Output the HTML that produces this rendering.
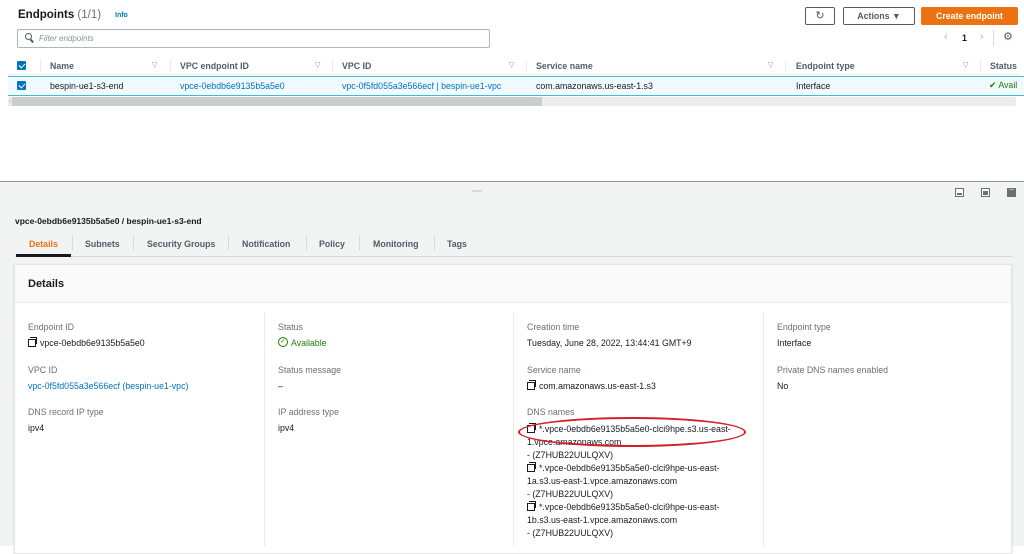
<!DOCTYPE html>
<html><head><style>
*{box-sizing:border-box;margin:0;padding:0}
body{width:1024px;height:546px;overflow:hidden;background:#fff;font-family:"Liberation Sans",sans-serif;font-size:8.8px;color:#16191f;position:relative}
.a{position:absolute;white-space:nowrap}
.blue{color:#0073bb}
.g{color:#687078}
.cb{position:absolute;width:9px;height:9px;background:#0073bb;border-radius:1px}
.cb:after{content:"";position:absolute;left:2.5px;top:0.5px;width:3px;height:5px;border:solid #fff;border-width:0 1.5px 1.5px 0;transform:rotate(45deg)}
.tri{color:#879596;font-size:7px}
.cp{display:inline-block;width:8px;height:8px;border:1.3px solid #16191f;position:relative;margin-right:4px;vertical-align:-1px;background:#fff}
.cp:before{content:"";position:absolute;left:1px;top:-3.5px;width:6px;height:6px;border:1.3px solid #16191f;border-left:none;border-bottom:none}
</style></head><body>
<div class="a" style="left:18px;top:9px;font-size:11.5px;font-weight:bold">Endpoints <span style="font-weight:normal;color:#687078">(1/1)</span></div>
<div class="a blue" style="left:115px;top:12px;font-size:7px;font-weight:bold">Info</div>
<div class="a" style="left:17px;top:29px;width:473px;height:19px;border:1px solid #aab7b8;border-radius:2px"></div>
<div class="a" style="left:25px;top:33px;width:7px;height:7px;border:1.5px solid #545b64;border-radius:50%"></div>
<div class="a" style="left:30px;top:40px;width:4px;height:1.5px;background:#545b64;transform:rotate(45deg)"></div>
<div class="a" style="left:39px;top:34px;font-style:italic;color:#879596;font-size:8px">Filter endpoints</div>
<div class="a" style="left:805px;top:7px;width:30px;height:18px;border:1px solid #545b64;border-radius:2px;text-align:center;font-size:11px;line-height:16px;color:#545b64">&#8635;</div>
<div class="a" style="left:843px;top:7px;width:72px;height:18px;border:1px solid #545b64;border-radius:2px;text-align:center;line-height:16px;color:#545b64;font-weight:bold">Actions &#9660;</div>
<div class="a" style="left:921px;top:7px;width:97px;height:18px;background:#ec7211;border-radius:2px;text-align:center;line-height:18px;color:#fff;font-weight:bold">Create endpoint</div>
<div class="a" style="left:944px;top:31px;font-size:11px;color:#aab7b8">&#8249;</div>
<div class="a" style="left:962px;top:33px;font-weight:bold">1</div>
<div class="a" style="left:980px;top:31px;font-size:11px;color:#aab7b8">&#8250;</div>
<div class="a" style="left:993px;top:30px;width:1px;height:16px;background:#d5dbdb"></div>
<div class="a" style="left:1003px;top:30px;font-size:11px;color:#545b64">&#9881;</div>
<div class="a" style="left:8px;top:56px;width:1012px;height:19px;border-bottom:1px solid #eaeded"></div>
<div class="cb" style="left:17px;top:61px"></div>
<div class="a" style="left:40px;top:59px;width:1px;height:13px;background:#eaeded"></div>
<div class="a" style="left:50px;top:61px;font-weight:bold;color:#545b64">Name</div>
<div class="a tri" style="left:152px;top:61px">&#9661;</div>
<div class="a" style="left:170px;top:59px;width:1px;height:13px;background:#eaeded"></div>
<div class="a" style="left:180px;top:61px;font-weight:bold;color:#545b64">VPC endpoint ID</div>
<div class="a tri" style="left:315px;top:61px">&#9661;</div>
<div class="a" style="left:332px;top:59px;width:1px;height:13px;background:#eaeded"></div>
<div class="a" style="left:342px;top:61px;font-weight:bold;color:#545b64">VPC ID</div>
<div class="a tri" style="left:509px;top:61px">&#9661;</div>
<div class="a" style="left:526px;top:59px;width:1px;height:13px;background:#eaeded"></div>
<div class="a" style="left:536px;top:61px;font-weight:bold;color:#545b64">Service name</div>
<div class="a tri" style="left:768px;top:61px">&#9661;</div>
<div class="a" style="left:785px;top:59px;width:1px;height:13px;background:#eaeded"></div>
<div class="a" style="left:796px;top:61px;font-weight:bold;color:#545b64">Endpoint type</div>
<div class="a tri" style="left:963px;top:61px">&#9661;</div>
<div class="a" style="left:980px;top:59px;width:1px;height:13px;background:#eaeded"></div>
<div class="a" style="left:990px;top:61px;font-weight:bold;color:#545b64">Status</div>
<div class="a" style="left:8px;top:76px;width:1016px;height:20px;background:#f1faff;border-top:1px solid #44b9d6;border-bottom:1px solid #44b9d6"></div>
<div class="cb" style="left:17px;top:81px"></div>
<div class="a" style="left:50px;top:81px">bespin-ue1-s3-end</div>
<div class="a blue" style="left:180px;top:81px">vpce-0ebdb6e9135b5a5e0</div>
<div class="a blue" style="left:342px;top:81px">vpc-0f5fd055a3e566ecf | bespin-ue1-vpc</div>
<div class="a" style="left:536px;top:81px">com.amazonaws.us-east-1.s3</div>
<div class="a" style="left:796px;top:81px">Interface</div>
<div class="a" style="left:989px;top:80px;color:#1d8102">&#10004;&#xFE0E; Avail</div>
<div class="a" style="left:8px;top:97px;width:1008px;height:9px;background:#eaeded"></div>
<div class="a" style="left:12px;top:97px;width:530px;height:9px;background:#c8cdce"></div>
<div class="a" style="left:9px;top:96px;font-size:8px;color:#aab7b8">&#8249;</div>
<div class="a" style="left:0;top:181px;width:1024px;height:365px;background:#f2f3f3;border-top:1px solid #8d9596"></div>
<div class="a" style="left:472px;top:190px;width:10px;height:2px;background:#d5dbdb"></div>
<div class="a" style="left:955px;top:188px;width:9px;height:9px;border:1.5px solid #687078;background:#fff"><div style="position:absolute;left:1px;right:1px;bottom:1px;height:2px;background:#687078"></div></div>
<div class="a" style="left:981px;top:188px;width:9px;height:9px;border:1.5px solid #687078;background:#fff"><div style="position:absolute;left:1px;right:1px;bottom:1px;height:4px;background:#687078"></div></div>
<div class="a" style="left:1007px;top:188px;width:9px;height:9px;border:1.5px solid #687078;background:#687078"><div style="position:absolute;left:1px;right:1px;top:0;height:1px;background:#aaa"></div></div>
<div class="a" style="left:15px;top:216px;font-weight:bold;font-size:8.5px">vpce-0ebdb6e9135b5a5e0 / bespin-ue1-s3-end</div>
<div class="a" style="left:15px;top:256px;width:997px;height:1px;background:#d5dbdb"></div>
<div class="a" style="left:16px;top:254px;width:55px;height:3px;background:#16191f"></div>
<div class="a" style="left:29px;top:239px;color:#ec7211;font-weight:bold">Details</div>
<div class="a" style="left:72px;top:236px;width:1px;height:14px;background:#d5dbdb"></div>
<div class="a" style="left:85px;top:239px;font-weight:bold;color:#545b64">Subnets</div>
<div class="a" style="left:133px;top:236px;width:1px;height:14px;background:#d5dbdb"></div>
<div class="a" style="left:147px;top:239px;font-weight:bold;color:#545b64">Security Groups</div>
<div class="a" style="left:228px;top:236px;width:1px;height:14px;background:#d5dbdb"></div>
<div class="a" style="left:242px;top:239px;font-weight:bold;color:#545b64">Notification</div>
<div class="a" style="left:306px;top:236px;width:1px;height:14px;background:#d5dbdb"></div>
<div class="a" style="left:319px;top:239px;font-weight:bold;color:#545b64">Policy</div>
<div class="a" style="left:359px;top:236px;width:1px;height:14px;background:#d5dbdb"></div>
<div class="a" style="left:373px;top:239px;font-weight:bold;color:#545b64">Monitoring</div>
<div class="a" style="left:434px;top:236px;width:1px;height:14px;background:#d5dbdb"></div>
<div class="a" style="left:447px;top:239px;font-weight:bold;color:#545b64">Tags</div>
<div class="a" style="left:14px;top:264px;width:998px;height:290px;background:#fff;border:1px solid #e4e7e8;box-shadow:0 1px 2px rgba(0,0,0,.15)"></div>
<div class="a" style="left:15px;top:265px;width:996px;height:38px;background:#fafafa;border-bottom:1px solid #eaeded"></div>
<div class="a" style="left:28px;top:278px;font-weight:bold;font-size:11px">Details</div>
<div class="a" style="left:264px;top:312px;width:1px;height:234px;background:#eaeded"></div>
<div class="a" style="left:513px;top:312px;width:1px;height:234px;background:#eaeded"></div>
<div class="a" style="left:763px;top:312px;width:1px;height:234px;background:#eaeded"></div>
<div class="a g" style="left:28px;top:322px">Endpoint ID</div>
<div class="a" style="left:28px;top:338px"><span class="cp"></span>vpce-0ebdb6e9135b5a5e0</div>
<div class="a g" style="left:28px;top:365px">VPC ID</div>
<div class="a blue" style="left:28px;top:381px">vpc-0f5fd055a3e566ecf (bespin-ue1-vpc)</div>
<div class="a g" style="left:28px;top:407px">DNS record IP type</div>
<div class="a" style="left:28px;top:423px">ipv4</div>
<div class="a g" style="left:278px;top:322px">Status</div>
<div class="a" style="left:278px;top:337px;width:10px;height:10px;border:1.3px solid #1d8102;border-radius:50%;color:#1d8102;font-size:7px;line-height:8px;text-align:center">&#10003;</div>
<div class="a" style="left:291px;top:338px;color:#1d8102">Available</div>
<div class="a g" style="left:278px;top:365px">Status message</div>
<div class="a" style="left:278px;top:381px">–</div>
<div class="a g" style="left:278px;top:407px">IP address type</div>
<div class="a" style="left:278px;top:423px">ipv4</div>
<div class="a g" style="left:527px;top:322px">Creation time</div>
<div class="a" style="left:527px;top:338px">Tuesday, June 28, 2022, 13:44:41 GMT+9</div>
<div class="a g" style="left:527px;top:365px">Service name</div>
<div class="a" style="left:527px;top:381px"><span class="cp"></span>com.amazonaws.us-east-1.s3</div>
<div class="a g" style="left:527px;top:407px">DNS names</div>
<div class="a" style="left:527px;top:423px;line-height:13px;white-space:normal;width:216px"><span class="cp"></span>*.vpce-0ebdb6e9135b5a5e0-clci9hpe.s3.us-east-1.vpce.amazonaws.com<br>- (Z7HUB22UULQXV)<br><span class="cp"></span>*.vpce-0ebdb6e9135b5a5e0-clci9hpe-us-east-1a.s3.us-east-1.vpce.amazonaws.com<br>- (Z7HUB22UULQXV)<br><span class="cp"></span>*.vpce-0ebdb6e9135b5a5e0-clci9hpe-us-east-1b.s3.us-east-1.vpce.amazonaws.com<br>- (Z7HUB22UULQXV)</div>
<div class="a" style="left:518px;top:417px;width:228px;height:30px;border:2.5px solid #d0202a;border-radius:50%/50%"></div>
<div class="a g" style="left:777px;top:322px">Endpoint type</div>
<div class="a" style="left:777px;top:338px">Interface</div>
<div class="a g" style="left:777px;top:365px">Private DNS names enabled</div>
<div class="a" style="left:777px;top:381px">No</div>
</body></html>
